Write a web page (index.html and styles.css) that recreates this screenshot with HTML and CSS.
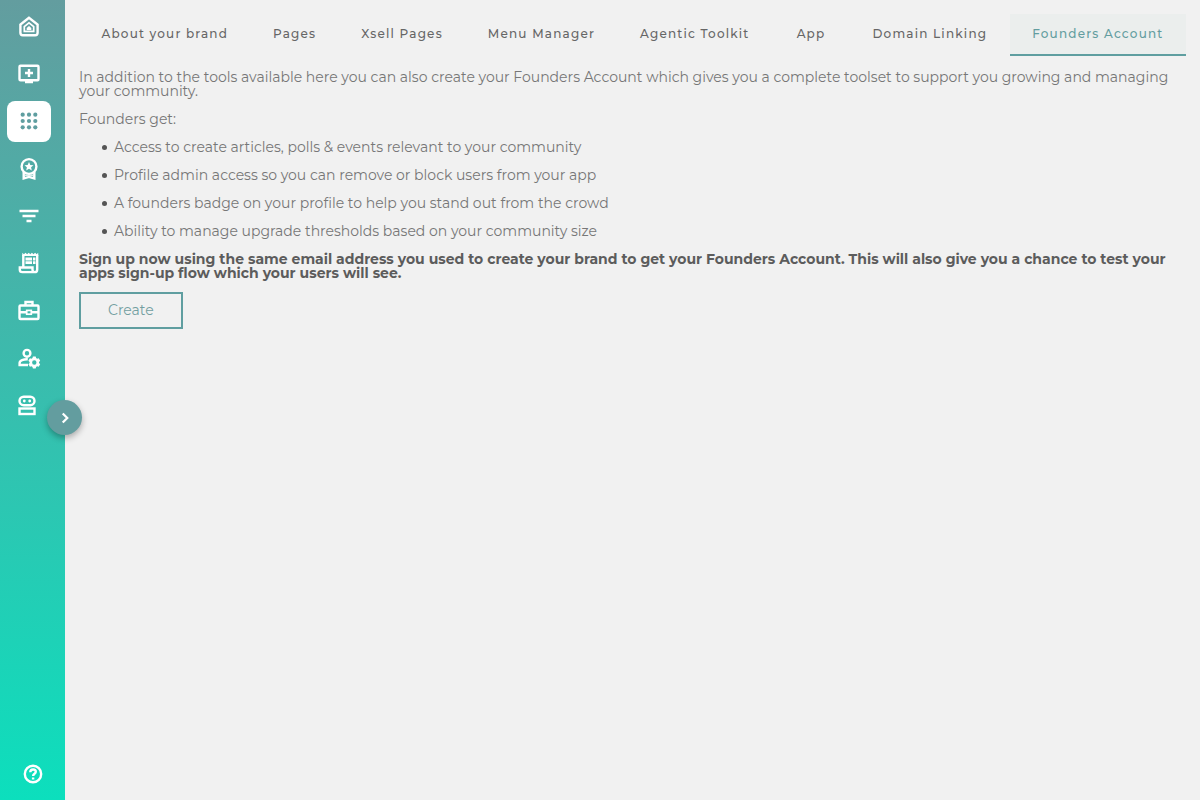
FILE: index.html
```html
<!DOCTYPE html>
<html lang="en">
<head>
  <meta charset="UTF-8" />
  <meta name="viewport" content="width=device-width, initial-scale=1" />
  <title>Founders Account</title>
  <link rel="stylesheet" href="styles.css">
</head>
<body>

  <div class="layout">
    <aside class="sidebar">
      <nav class="side-nav" aria-label="Main">
        <a class="side-link" href="#home" aria-label="Home">
          <svg class="icon" viewBox="0 0 24 24"><path d="M12 2.8 3.4 9.6v8.2c0 1.500.9 2.400 2.400 2.400h12.400c1.500 0 2.400-.9 2.400-2.400V9.600z"/><path class="medium" d="M7.300 16.300v-4.600L12 7.900l4.700 3.800v4.600z"/><path class="fill" d="M9.700 15v-2l2.300-1.900 2.300 1.900v2z"/></svg>
        </a>
        <a class="side-link" href="#add" aria-label="Add screen">
          <svg class="icon" viewBox="0 0 24 24"><rect x="2.500" y="3.700" width="19" height="14.500" rx="1"/><path d="M12 7v8M8 11h8M8 20h8"/></svg>
        </a>
        <a class="side-link active" href="#apps" aria-label="Apps">
          <svg class="icon solid" viewBox="0 0 24 24"><circle cx="5.7" cy="5.7" r="2.1"/><circle cx="12" cy="5.7" r="2.1"/><circle cx="18.3" cy="5.7" r="2.1"/><circle cx="5.7" cy="12" r="2.1"/><circle cx="12" cy="12" r="2.1"/><circle cx="18.3" cy="12" r="2.1"/><circle cx="5.7" cy="18.3" r="2.1"/><circle cx="12" cy="18.3" r="2.1"/><circle cx="18.3" cy="18.3" r="2.1"/></svg>
        </a>
        <a class="side-link" href="#badges" aria-label="Badges">
          <svg class="icon" viewBox="0 0 24 24"><circle cx="12" cy="9.500" r="7.400"/><path class="fill" d="m12 5 1.300 2.900 3.200.3-2.400 2.100.7 3.100-2.800-1.600-2.800 1.600.7-3.100-2.400-2.100 3.200-.3z"/><path d="M6.700 15v6.500l5.300-1.600 5.300 1.600V15"/><path class="thin" d="M8 18.300h8"/></svg>
        </a>
        <a class="side-link" href="#filters" aria-label="Filters">
          <svg class="icon" viewBox="0 0 24 24"><path d="M2.500 7h19M5.500 12h13M9.500 17h5"/></svg>
        </a>
        <a class="side-link" href="#reports" aria-label="Reports">
          <svg class="icon" viewBox="0 0 24 24"><path d="M6.300 16V3.800M20.200 3.800v14.600c0 1.700-1 2.700-2.600 2.700H5.400c-1.600 0-2.600-1-2.600-2.400v-2.200h12.700v2.300c0 1.400.8 2.300 2.100 2.300"/><path class="fill" d="M5.300 5V1.800l1.600 1.500 1.600-1.500 1.600 1.500 1.600-1.500 1.600 1.500 1.600-1.500 1.600 1.500 1.600-1.500 1.600 1.500 1.500-1.500V5z"/><path class="fill" d="M8.500 6.500h6.500v3H8.500zM16 6.500h2.500v3H16zM8.500 10.300h6.500v2.700H8.500zM16 10.300h2.500v2.700H16z"/></svg>
        </a>
        <a class="side-link" href="#services" aria-label="Services">
          <svg class="icon" viewBox="0 0 24 24"><rect x="2.500" y="6.500" width="19" height="13.500" rx="1"/><path d="M8.500 6.500V3h7v3.500M2.500 13.300H10M14 13.300h7.500"/><rect class="medium" x="9.700" y="11.400" width="4.600" height="3.800"/></svg>
        </a>
        <a class="side-link" href="#users" aria-label="User settings">
          <svg class="icon" viewBox="0 0 24 24"><circle cx="10" cy="7.300" r="3.400"/><path d="M11 19H2.600v-2c0-2.300 4-4 8.200-3.800"/><path class="fill" fill-rule="evenodd" d="m15.900 10.500-.4 1.600-1 .6-1.600-.5-1.500 2.500 1.200 1.200v1.200l-1.200 1.200 1.500 2.500 1.600-.5 1 .6.4 1.600h2.800l.4-1.600 1-.6 1.600.5 1.500-2.500-1.200-1.200v-1.200l1.200-1.200-1.500-2.500-1.600.5-1-.6-.4-1.600zM17.300 14.300a2.200 2.200 0 1 1 0 4.400 2.200 2.200 0 0 1 0-4.400z"/></svg>
        </a>
        <a class="side-link" href="#assistant" aria-label="Assistant">
          <svg class="icon" viewBox="0 0 24 24"><rect x="2.500" y="2.700" width="15" height="8.500" rx="4.200"/><rect x="2.500" y="14.500" width="15" height="5.500"/><circle class="fill" cx="7.300" cy="7" r="1.400"/><circle class="fill" cx="12.700" cy="7" r="1.400"/></svg>
        </a>
      </nav>
      <a class="help-link" href="#help" aria-label="Help">
        <svg class="icon" viewBox="0 0 24 24"><circle cx="12" cy="12" r="8.200"/><path d="M9.300 10.200c0-1.700 1.200-2.700 2.800-2.700s2.700 1 2.700 2.300c0 2-2.700 2-2.700 4.200M12.100 15.500v1.900"/></svg>
      </a>
      <button class="expand" type="button" aria-label="Expand menu">
        <svg viewBox="0 0 24 24"><path d="m9 6 6 6-6 6"/></svg>
      </button>
    </aside>

    <main class="content">
      <nav class="tabs" aria-label="Sections">
        <a class="tab" href="#brand">About your brand</a>
        <a class="tab" href="#pages">Pages</a>
        <a class="tab" href="#xsell">Xsell Pages</a>
        <a class="tab" href="#menu">Menu Manager</a>
        <a class="tab" href="#agentic">Agentic Toolkit</a>
        <a class="tab" href="#app">App</a>
        <a class="tab" href="#domain">Domain Linking</a>
        <a class="tab active" href="#founders" aria-current="page">Founders Account</a>
      </nav>

      <p>In addition to the tools available here you can also create your Founders Account which gives you a complete toolset to support you growing and managing your community.</p>
      <p>Founders get:</p>
      <ul class="perks">
        <li>Access to create articles, polls &amp; events relevant to your community</li>
        <li>Profile admin access so you can remove or block users from your app</li>
        <li>A founders badge on your profile to help you stand out from the crowd</li>
        <li>Ability to manage upgrade thresholds based on your community size</li>
      </ul>
      <p class="signup">Sign up now using the same email address you used to create your brand to get your Founders Account. This will also give you a chance to test your apps sign-up flow which your users will see.</p>
      <button class="create" type="button">Create</button>
    </main>
  </div>

</body>
</html>
```
FILE: styles.css
```css
* {
  box-sizing: border-box;
}

body {
  margin: 0;
  background: #f1f1f1;
  color: #777;
  font-family: Montserrat, Inter, sans-serif;
  font-size: 14px;
  line-height: 14px;
}

.layout {
  display: flex;
  min-height: 100vh;
}

/* Sidebar */
.sidebar {
  position: relative;
  flex: none;
  display: flex;
  flex-direction: column;
  justify-content: space-between;
  width: 65px;
  padding: 6px 7px 14px;
  background: linear-gradient(#639d9f, #0cdfbd);
}

.side-nav {
  display: flex;
  flex-direction: column;
  justify-content: space-between;
  height: 420px;
}

.side-link {
  display: flex;
  align-items: center;
  justify-content: center;
  width: 44px;
  height: 41px;
  border-radius: 8px;
  color: #fff;
}

.side-link.active {
  background: #fff;
  color: #5f9ea0;
}

.help-link {
  display: flex;
  justify-content: center;
  color: #fff;
}

.icon {
  width: 24px;
  height: 24px;
  fill: none;
  stroke: currentColor;
  stroke-width: 2.4;
}

.icon .medium {
  stroke-width: 1.7;
}

.icon .thin {
  stroke-width: 1;
}

.icon.solid,
.icon .fill {
  fill: currentColor;
  stroke: none;
}

/* Sits over the sidebar edge */
.expand {
  position: absolute;
  top: 400px;
  right: -17px;
  display: flex;
  align-items: center;
  justify-content: center;
  width: 35px;
  height: 35px;
  padding: 0;
  border: none;
  border-radius: 50%;
  background: #639d9f;
  box-shadow: 0 3px 6px rgba(0, 0, 0, 0.3);
  color: #fff;
  cursor: pointer;
}

.expand svg {
  width: 18px;
  height: 18px;
  fill: none;
  stroke: currentColor;
  stroke-width: 3;
}

/* Content */
.content {
  flex: 1;
  min-width: 0;
  padding: 14px;
}

.tabs {
  display: flex;
  flex-wrap: wrap;
}

.tab {
  flex: 1 0 auto;
  min-width: 78px;
  padding: 0 20px;
  border-bottom: 2px solid transparent;
  color: #666;
  font-size: 12px;
  font-weight: 500;
  line-height: 40px;
  letter-spacing: 0.1em;
  text-align: center;
  text-decoration: none;
}

.tab.active {
  border-color: #5f9ea0;
  background: #ebeeed;
  color: #639d9f;
}

p,
ul {
  margin: 14px 0;
}

.perks {
  padding-left: 23px;
  list-style: none;
}

.perks li {
  display: flex;
  align-items: center;
  gap: 7px;
}

.perks li::before {
  content: "";
  flex: none;
  width: 5px;
  height: 5px;
  border-radius: 50%;
  background: #555;
}

.perks li + li {
  margin-top: 14px;
}

.signup {
  margin-bottom: 12px;
  color: #5c5c5c;
  font-weight: 700;
}

.create {
  padding: 0 27px;
  border: 2px solid #5f9ea0;
  background: transparent;
  color: #739fa1;
  font: inherit;
  line-height: 33px;
  cursor: pointer;
}
```
